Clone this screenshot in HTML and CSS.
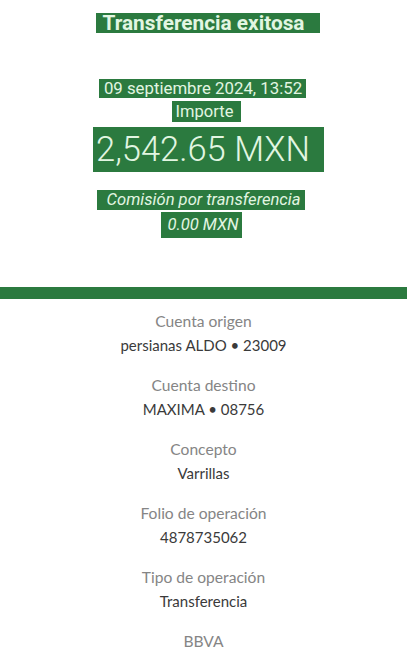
FILE: index.html
```html
<!DOCTYPE html>
<html lang="es">
  <head>
    <meta charset="UTF-8" />
    <meta name="viewport" content="width=device-width, initial-scale=1.0" />
    <title>Transferencia exitosa</title>
    <link rel="stylesheet" href="styles.css">
  </head>
  <body>
    <div class="hero">
      <div class="line"><span class="tag title">Transferencia exitosa</span></div>

      <div class="line date-line"><span class="tag date">09 septiembre 2024, 13:52</span></div>
      <div class="line"><span class="tag label">Importe</span></div>
      <div class="line"><span class="tag amount">2,542.65 MXN</span></div>

      <div class="line fee-line"><span class="tag fee">Comisión por transferencia</span></div>
      <div class="line"><span class="tag fee fee-value">0.00 MXN</span></div>
    </div>

    <div class="band"></div>

    <ul class="details">
      <li>
        <span class="key">Cuenta origen</span>
        <span class="val">persianas ALDO • 23009</span>
      </li>
      <li>
        <span class="key">Cuenta destino</span>
        <span class="val">MAXIMA • 08756</span>
      </li>
      <li>
        <span class="key">Concepto</span>
        <span class="val">Varrillas</span>
      </li>
      <li>
        <span class="key">Folio de operación</span>
        <span class="val">4878735062</span>
      </li>
      <li>
        <span class="key">Tipo de operación</span>
        <span class="val">Transferencia</span>
      </li>
      <li>
        <span class="key">BBVA</span>
      </li>
    </ul>
  </body>
</html>
```

FILE: styles.css
```css
html,
body {
  margin: 0;
  padding: 0;
  background: #fff;
  height: 100%;
  overflow: hidden;
}

body {
  font-family: Lato, "Open Sans", sans-serif;
  color: #333;
}

.hero {
  font-family: Roboto, "Noto Sans", sans-serif;
  text-align: center;
  padding-top: 13px;
  height: 287px;
  box-sizing: border-box;
}

.line {
  display: flex;
  justify-content: center;
}

.tag {
  display: inline-block;
  background: #2b7a3f;
  color: #e2f6e2;
}

.title {
  font-size: 20.8px;
  font-weight: 700;
  line-height: 20px;
  padding: 0 16px 0 7px;
  margin-left: 9px;
}

.date-line {
  margin-top: 46px;
}

.date {
  font-size: 16.8px;
  line-height: 19px;
  padding: 0 4px 0 5px;
  margin-right: 2px;
}

.label {
  font-size: 16.5px;
  line-height: 21px;
  margin-top: 3px;
  padding: 0 8px 0 4px;
  margin-left: 6px;
}

.amount {
  font-size: 34.5px;
  font-weight: 300;
  line-height: 45px;
  margin-top: 5px;
  padding: 0 14px 0 3px;
  margin-left: 10px;
}

.fee-line {
  margin-top: 18px;
}

.fee {
  font-size: 16.6px;
  font-style: italic;
  line-height: 20px;
  padding: 0 5px 0 10px;
  margin-right: 5px;
}

.fee-value {
  line-height: 24px;
  margin-top: 2px;
  padding: 1px 3px 1px 6px;
  margin-right: 4px;
}

.band {
  height: 12px;
  background: #2b7a3f;
}

.details {
  list-style: none;
  margin: 0;
  padding: 10px 0 0;
  text-align: center;
}

.details li {
  display: flex;
  flex-direction: column;
  margin-bottom: 16px;
}

.key {
  color: #858585;
  font-size: 15.6px;
  line-height: 24px;
}

.val {
  color: #3a3a3a;
  font-size: 15px;
  line-height: 24px;
}
```
